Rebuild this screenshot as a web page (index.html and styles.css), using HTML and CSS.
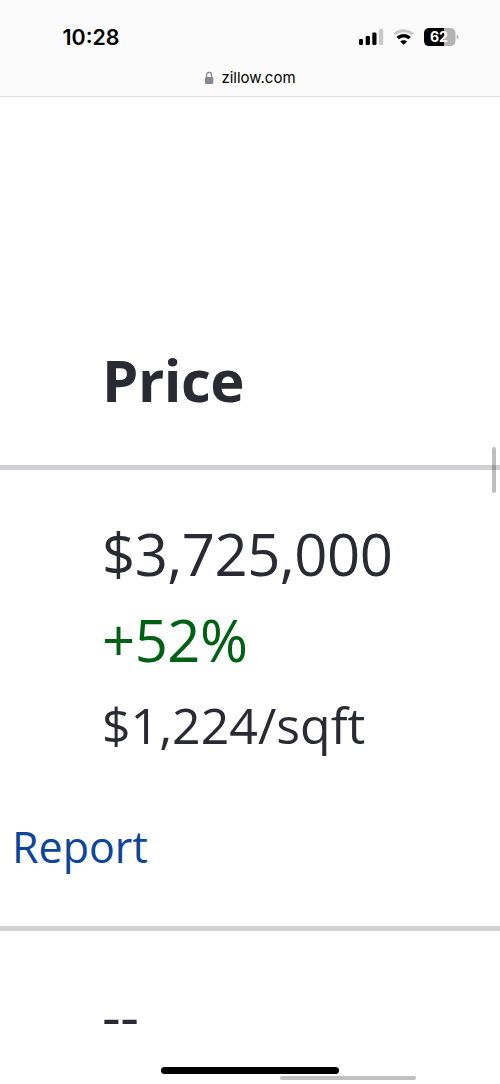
FILE: index.html
```html
<!DOCTYPE html>
<html lang="en">
<head>
  <meta charset="UTF-8">
  <meta name="viewport" content="width=device-width, initial-scale=1.0">
  <title>Price History</title>
  <link rel="stylesheet" href="styles.css">
</head>
<body>

  <header class="browser-bar">
    <div class="status">
      <span class="time">10:28</span>
      <svg class="status-icons" width="102" height="20" viewBox="0 0 102 20">
        <rect x="1" y="12" width="4" height="6" rx="1.2"/>
        <rect x="7.700" y="9" width="4.200" height="9" rx="1.2"/>
        <rect x="14.300" y="5.500" width="4.200" height="12.500" rx="1.2"/>
        <rect x="21" y="2" width="4.200" height="16" rx="1.2" fill="#c8c8c8"/>
        <path d="M35.500 6.300C41 .8 50 .8 55.800 6.300L53.800 8.500C49 4.200 42.500 4.200 37.700 8.500Z" fill="#c8c8c8"/>
        <path d="M38.500 9.900C42.500 6 49 6 52.800 9.900L50.500 12.200C47.500 9.800 44 9.800 40.900 12.200Z"/>
        <path d="M42.200 14.500C44 12.900 47.300 12.900 49.100 14.500L45.700 17.800Z"/>
        <path d="M71.500 1H86V19H71.500Q66 19 66 13.500V6.500Q66 1 71.500 1Z"/>
        <path d="M86 1H92Q97.500 1 97.500 6.500V13.500Q97.500 19 92 19H86Z" fill="#b4b4b4"/>
        <path d="M98.700 7.500Q100.500 8.300 100.500 10T98.700 12.500Z" fill="#b4b4b4"/>
        <text class="battery-text" x="81" y="15.300" text-anchor="middle">62</text>
      </svg>
    </div>
    <div class="address">
      <svg class="lock" width="10" height="14" viewBox="0 0 10 14">
        <rect x="1" y="6" width="8.300" height="7" rx="1.2"/>
        <path d="M2.700 6.500V4a2.450 2.700 0 0 1 4.900 0V6.500" fill="none" stroke="#88888c" stroke-width="1.200"/>
      </svg>
      <span>zillow.com</span>
    </div>
  </header>

  <main class="history">
    <h2 class="heading">Price</h2>
    <div class="entry">
      <div class="price">$3,725,000</div>
      <div class="change">+52%</div>
      <div class="sqft">$1,224/sqft</div>
      <a class="report">Report</a>
    </div>
    <div class="empty">--</div>
  </main>

  <div class="scroll-v"></div>
  <div class="scroll-h"></div>
  <div class="home"></div>

</body>
</html>
```

FILE: styles.css
```css
* {
  box-sizing: border-box;
}
body {
  margin: 0;
  height: 1084px;
  overflow: hidden;
  position: relative;
  background-color: #fff;
  color: #2a2a33;
  font-family: "Open Sans", "Noto Sans", sans-serif;
}
.browser-bar {
  height: 97px;
  padding-top: 24px;
  background-color: #fbfbfb;
  border-bottom: 1px solid #dedede;
  color: #000;
  font-family: Inter, sans-serif;
}
.status {
  display: flex;
  justify-content: space-between;
  height: 28px;
  padding: 0 40px 0 62.5px;
}
.time {
  font-size: 21.4px;
  font-weight: 600;
  line-height: 27px;
}
.status-icons {
  margin-top: 3px;
}
.battery-text {
  fill: #fff;
  font-size: 14px;
  font-weight: 700;
}
.address {
  display: flex;
  justify-content: center;
  align-items: center;
  gap: 7px;
  height: 51px;
  font-size: 15px;
}
.lock {
  fill: #88888c;
}
.history {
  display: flex;
  flex-direction: column;
}
.heading {
  height: 373px;
  margin: 0;
  padding: 243px 0 0 102px;
  border-bottom: 5px solid #d1d1d5;
  font-size: 58px;
  font-weight: 700;
  line-height: 80px;
  letter-spacing: -0.5px;
}
.entry {
  height: 461px;
  padding: 41px 0 0 102px;
  border-bottom: 5px solid #d1d1d5;
}
.price, .change {
  height: 86px;
  font-size: 58px;
  line-height: 86px;
  letter-spacing: -0.5px;
}
.change {
  color: #006014;
}
.sqft {
  height: 86px;
  font-size: 50px;
  line-height: 84px;
}
.report {
  display: block;
  margin: 43px 0 0 -90px;
  color: #0d4599;
  font-size: 43px;
  line-height: 70px;
}
.empty {
  padding: 42px 0 0 102px;
  font-size: 58px;
  line-height: 86px;
  letter-spacing: -0.5px;
}
.scroll-v, .scroll-h, .home {
  position: absolute;
  border-radius: 4px;
}
.scroll-v {
  left: 492px;
  top: 447px;
  width: 4px;
  height: 46px;
  background-color: rgba(0, 0, 0, 0.25);
}
.scroll-h {
  left: 280px;
  top: 1076px;
  width: 136px;
  height: 4px;
  background-color: #c1c1c1;
}
.home {
  left: 161px;
  top: 1067px;
  width: 178px;
  height: 7px;
  background-color: #000;
}
```
